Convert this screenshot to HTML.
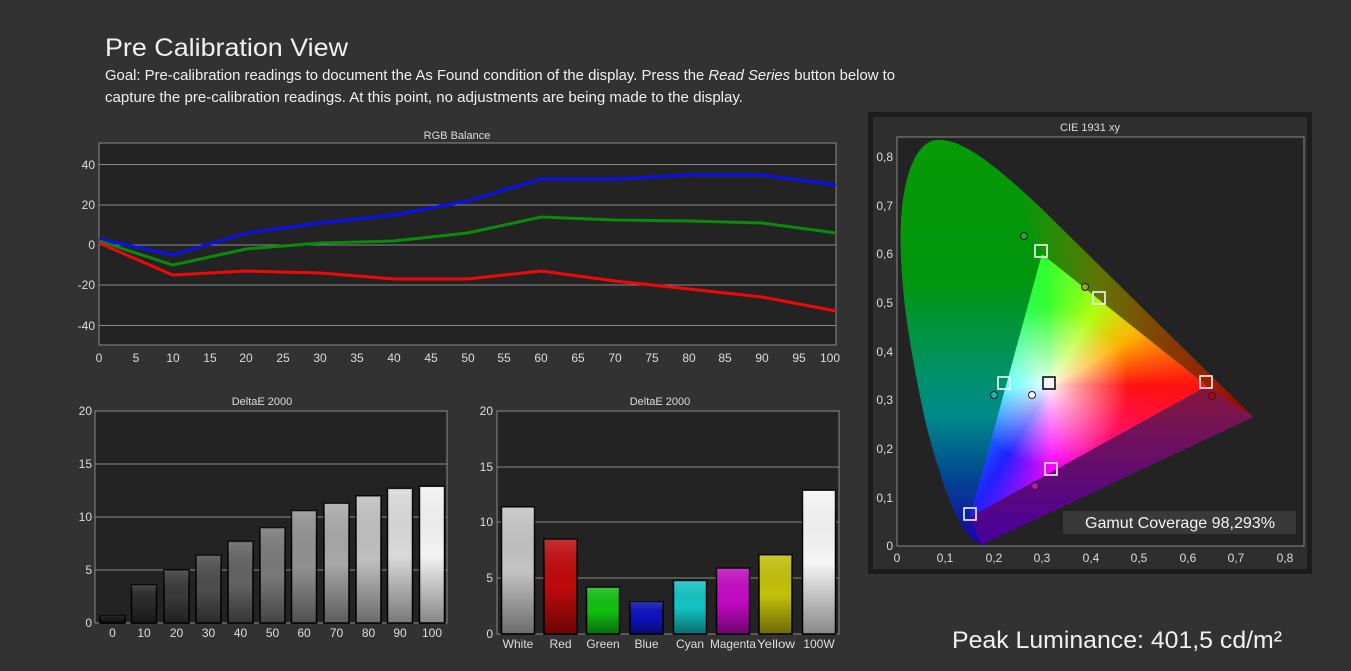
<!DOCTYPE html>
<html><head><meta charset="utf-8"><style>
html,body{margin:0;padding:0;background:#323232;width:1351px;height:671px;overflow:hidden}
#cie{position:absolute;left:0;top:0;width:1351px;height:671px}
svg text{font-family:"Liberation Sans",sans-serif}
</style></head><body>
<svg width="1351" height="671" style="position:absolute;left:0;top:0">
<defs>
<linearGradient id="horse" x1="0" y1="137" x2="0" y2="546" gradientUnits="userSpaceOnUse">
<stop offset="0" stop-color="#069a06"/><stop offset="0.35" stop-color="#02960e"/><stop offset="0.6" stop-color="#009070"/><stop offset="0.68" stop-color="#008a8a"/><stop offset="0.82" stop-color="#004c90"/><stop offset="1" stop-color="#1a00a8"/>
</linearGradient>
<linearGradient id="redside" x1="1020" y1="0" x2="1250" y2="0" gradientUnits="userSpaceOnUse">
<stop offset="0" stop-color="#6a7a00" stop-opacity="0"/><stop offset="0.35" stop-color="#7a6a00" stop-opacity=".8"/><stop offset="0.6" stop-color="#8a4000" stop-opacity=".95"/><stop offset="1" stop-color="#a80000"/>
</linearGradient>
<linearGradient id="botside" x1="0" y1="380" x2="0" y2="546" gradientUnits="userSpaceOnUse">
<stop offset="0" stop-color="#a0002a"/><stop offset="1" stop-color="#5000a0"/>
</linearGradient>
<linearGradient id="shade" x1="0" y1="0" x2="0" y2="1">
<stop offset="0" stop-color="#fff" stop-opacity="0.15"/><stop offset="0.5" stop-color="#000" stop-opacity="0"/><stop offset="1" stop-color="#000" stop-opacity="0.45"/>
</linearGradient>
</defs>
<text x="105" y="56" font-size="25" fill="#f0f0f0" textLength="243" lengthAdjust="spacingAndGlyphs">Pre Calibration View</text>
<text x="105" y="80" font-size="14.5" fill="#f0f0f0" textLength="790" lengthAdjust="spacingAndGlyphs">Goal: Pre-calibration readings to document the As Found condition of the display. Press the <tspan font-style="italic">Read Series</tspan> button below to</text>
<text x="105" y="102" font-size="14.5" fill="#f0f0f0" textLength="638" lengthAdjust="spacingAndGlyphs">capture the pre-calibration readings. At this point, no adjustments are being made to the display.</text>

<text x="457" y="139" font-size="11" fill="#ddd" text-anchor="middle">RGB Balance</text>
<rect x="99" y="143" width="737" height="202" fill="#232323" stroke="#8a8a8a"/>
<g stroke="#8a8a8a" stroke-width="1">
<line x1="99" y1="164.5" x2="836" y2="164.5"/><line x1="99" y1="205" x2="836" y2="205"/><line x1="99" y1="245" x2="836" y2="245"/><line x1="99" y1="285" x2="836" y2="285"/><line x1="99" y1="325.5" x2="836" y2="325.5"/>
</g>
<g font-size="12" fill="#ddd" text-anchor="end">
<text x="95" y="169">40</text><text x="95" y="209">20</text><text x="95" y="249">0</text><text x="95" y="289">-20</text><text x="95" y="330">-40</text>
</g>
<g font-size="12" fill="#ddd" text-anchor="middle">
<text x="99" y="362">0</text><text x="136" y="362">5</text><text x="173" y="362">10</text><text x="210" y="362">15</text><text x="246" y="362">20</text><text x="283" y="362">25</text><text x="320" y="362">30</text><text x="357" y="362">35</text><text x="394" y="362">40</text><text x="431" y="362">45</text><text x="468" y="362">50</text><text x="504" y="362">55</text><text x="541" y="362">60</text><text x="578" y="362">65</text><text x="615" y="362">70</text><text x="652" y="362">75</text><text x="689" y="362">80</text><text x="725" y="362">85</text><text x="762" y="362">90</text><text x="799" y="362">95</text><text x="830" y="362">100</text>
</g>
<g fill="none" stroke-width="3" stroke-linejoin="round">
<polyline stroke="#0a10f0" points="99,239 172.7,255 246.4,233 320.1,223 393.8,215 467.5,201 541.2,179 614.9,179 688.6,175 762.3,175 836,185"/>
<polyline stroke="#0a8a0a" points="99,241 172.7,265 246.4,249 320.1,243 393.8,241 467.5,233 541.2,217 614.9,220 688.6,221 762.3,223 836,233"/>
<polyline stroke="#f00808" points="99,243 172.7,275 246.4,271 320.1,273 393.8,279 467.5,279 541.2,271 614.9,281 688.6,289 762.3,297 836,311"/>
</g>

<text x="262" y="405" font-size="11" fill="#ddd" text-anchor="middle">DeltaE 2000</text>
<rect x="95" y="411" width="352" height="212" fill="#232323" stroke="#8a8a8a"/>
<g stroke="#8a8a8a"><line x1="95" y1="464" x2="447" y2="464"/><line x1="95" y1="517" x2="447" y2="517"/><line x1="95" y1="570" x2="447" y2="570"/></g>
<g font-size="12" fill="#ddd" text-anchor="end"><text x="92" y="415">20</text><text x="92" y="468">15</text><text x="92" y="521">10</text><text x="92" y="574">5</text><text x="92" y="627">0</text></g>
<g stroke="#000" stroke-width="1.5">
<rect x="100" y="615.6" width="25" height="7.4" fill="#1a1a1a"/>
<rect x="131.5" y="584.8" width="25" height="38.2" fill="#2a2a2a"/>
<rect x="164" y="570" width="25" height="53" fill="#3a3a3a"/>
<rect x="196" y="555.2" width="25" height="67.8" fill="#4e4e4e"/>
<rect x="228" y="541.4" width="25" height="81.6" fill="#636363"/>
<rect x="260" y="527.6" width="25" height="95.4" fill="#7a7a7a"/>
<rect x="291.5" y="510.6" width="25" height="112.4" fill="#919191"/>
<rect x="324" y="503.2" width="25" height="119.8" fill="#a8a8a8"/>
<rect x="356" y="495.8" width="25" height="127.2" fill="#c0c0c0"/>
<rect x="387.5" y="488.4" width="25" height="134.6" fill="#dadada"/>
<rect x="419.5" y="486.3" width="25" height="136.7" fill="#f4f4f4"/>
</g>
<g fill="url(#shade)">
<rect x="100" y="615.6" width="25" height="7.4"/>
<rect x="131.5" y="584.8" width="25" height="38.2"/>
<rect x="164" y="570" width="25" height="53"/>
<rect x="196" y="555.2" width="25" height="67.8"/>
<rect x="228" y="541.4" width="25" height="81.6"/>
<rect x="260" y="527.6" width="25" height="95.4"/>
<rect x="291.5" y="510.6" width="25" height="112.4"/>
<rect x="324" y="503.2" width="25" height="119.8"/>
<rect x="356" y="495.8" width="25" height="127.2"/>
<rect x="387.5" y="488.4" width="25" height="134.6"/>
<rect x="419.5" y="486.3" width="25" height="136.7"/>
</g>
<g font-size="12" fill="#ddd" text-anchor="middle">
<text x="112.5" y="637">0</text><text x="144" y="637">10</text><text x="176.5" y="637">20</text><text x="208.5" y="637">30</text><text x="240.5" y="637">40</text><text x="272.5" y="637">50</text><text x="304" y="637">60</text><text x="336.5" y="637">70</text><text x="368.5" y="637">80</text><text x="400" y="637">90</text><text x="432" y="637">100</text>
</g>

<text x="660" y="405" font-size="11" fill="#ddd" text-anchor="middle">DeltaE 2000</text>
<rect x="497" y="411" width="342" height="223" fill="#232323" stroke="#8a8a8a"/>
<g stroke="#8a8a8a"><line x1="497" y1="467" x2="839" y2="467"/><line x1="497" y1="522" x2="839" y2="522"/><line x1="497" y1="578" x2="839" y2="578"/></g>
<g font-size="12" fill="#ddd" text-anchor="end"><text x="493" y="415">20</text><text x="493" y="471">15</text><text x="493" y="526">10</text><text x="493" y="582">5</text><text x="493" y="638">0</text></g>
<g stroke="#000" stroke-width="1.5">
<rect x="501.5" y="506.9" width="33" height="127" fill="#c4c4c4"/>
<rect x="544" y="539.2" width="33" height="94.8" fill="#c00a0a"/>
<rect x="586.5" y="587.2" width="33" height="46.8" fill="#12c012"/>
<rect x="630" y="601.7" width="33" height="32.3" fill="#0e12c0"/>
<rect x="673.5" y="580.5" width="33" height="53.5" fill="#14c4c4"/>
<rect x="716.5" y="568.2" width="33" height="65.8" fill="#c40ac4"/>
<rect x="759" y="554.8" width="33" height="79.2" fill="#c4c00a"/>
<rect x="802.5" y="490.2" width="33" height="143.8" fill="#f6f6f6"/>
</g>
<g fill="url(#shade)">
<rect x="501.5" y="506.9" width="33" height="127"/>
<rect x="544" y="539.2" width="33" height="94.8"/>
<rect x="586.5" y="587.2" width="33" height="46.8"/>
<rect x="630" y="601.7" width="33" height="32.3"/>
<rect x="673.5" y="580.5" width="33" height="53.5"/>
<rect x="716.5" y="568.2" width="33" height="65.8"/>
<rect x="759" y="554.8" width="33" height="79.2"/>
<rect x="802.5" y="490.2" width="33" height="143.8"/>
</g>
<g font-size="12" fill="#ddd" text-anchor="middle">
<text x="518" y="648">White</text><text x="560.5" y="648">Red</text><text x="603" y="648">Green</text><text x="646.5" y="648">Blue</text><text x="690" y="648">Cyan</text><text x="733" y="648" textLength="46" lengthAdjust="spacingAndGlyphs">Magenta</text><text x="776" y="648" textLength="38" lengthAdjust="spacingAndGlyphs">Yellow</text><text x="819" y="648">100W</text>
</g>

<rect x="868" y="112" width="444" height="462" fill="#1c1c1c"/>
<rect x="873" y="117" width="434" height="452" fill="#2e2e2e"/>
<text x="1090" y="131" font-size="11" fill="#ddd" text-anchor="middle">CIE 1931 xy</text>
<rect x="897" y="137" width="407" height="409" fill="#232323" stroke="#8a8a8a"/>
<g font-size="12" fill="#ddd" text-anchor="end">
<text x="893" y="161">0,8</text><text x="893" y="210">0,7</text><text x="893" y="258">0,6</text><text x="893" y="307">0,5</text><text x="893" y="356">0,4</text><text x="893" y="404">0,3</text><text x="893" y="453">0,2</text><text x="893" y="502">0,1</text><text x="893" y="550">0</text>
</g>
<g font-size="12" fill="#ddd" text-anchor="middle">
<text x="897" y="562">0</text><text x="945" y="562">0,1</text><text x="994" y="562">0,2</text><text x="1042" y="562">0,3</text><text x="1091" y="562">0,4</text><text x="1139" y="562">0,5</text><text x="1188" y="562">0,6</text><text x="1236" y="562">0,7</text><text x="1285" y="562">0,8</text>
</g>
<path fill="url(#horse)" d="M981,545 L970,537 C955,520 940,480 925,420 C910,350 898,280 901,220 C904,170 918,142 936,140 C960,138 990,160 1043,210 L1253,417 Z"/>
<path fill="url(#redside)" d="M1042,254 L1010,180 C1020,190 1030,198 1043,210 L1253,417 L1207,386 Z"/>
<polygon fill="url(#botside)" opacity="0.85" points="1207,386 1253,417 981,545 970,517"/>
</svg>
<div id="cie" style="clip-path:polygon(1207px 386px,1042px 254px,970px 517px);background:radial-gradient(circle at 1049px 386px,rgba(255,255,255,.95) 0,rgba(255,255,255,.6) 25px,rgba(255,255,255,0) 80px),conic-gradient(from 0deg at 1049px 386px,#30ff30 -3deg,#b0ff10 31deg,#ffb000 60deg,#ff1010 90deg,#ff10a0 150deg,#ff00ff 178deg,#2020ff 211deg,#00ffff 270deg,#30ff30 357deg)"></div>
<svg width="1351" height="671" style="position:absolute;left:0;top:0">
<g fill="none" stroke="#fff" stroke-width="1.5">
<rect x="1035" y="245" width="12" height="12"/><rect x="1093" y="292" width="12" height="12"/><rect x="1200" y="376" width="12" height="12"/><rect x="998" y="377" width="12" height="12"/><rect x="1045" y="463" width="12" height="12"/><rect x="964" y="508" width="12" height="12"/>
</g>
<rect x="1043" y="377" width="12" height="12" fill="#f4f4f4" stroke="#000" stroke-width="1.5"/>
<g stroke="#222" stroke-width="1">
<circle cx="1024" cy="236" r="3.5" fill="#30a030"/><circle cx="1085" cy="287" r="3.5" fill="#a0a020"/><circle cx="1212" cy="396" r="3.5" fill="#c00000"/><circle cx="1032" cy="395" r="3.5" fill="#fff"/><circle cx="994" cy="395" r="3.5" fill="#20b0b0"/><circle cx="1035" cy="486" r="3.5" fill="#c010c0"/>
</g>
<rect x="1063" y="511" width="233" height="23" fill="#393939"/>
<text x="1180" y="528" font-size="16" fill="#f4f4f4" text-anchor="middle" textLength="190" lengthAdjust="spacingAndGlyphs">Gamut Coverage 98,293%</text>
<text x="952" y="648" font-size="24" fill="#f0f0f0" textLength="330" lengthAdjust="spacingAndGlyphs">Peak Luminance: 401,5 cd/m²</text>
</svg>
</body></html>
